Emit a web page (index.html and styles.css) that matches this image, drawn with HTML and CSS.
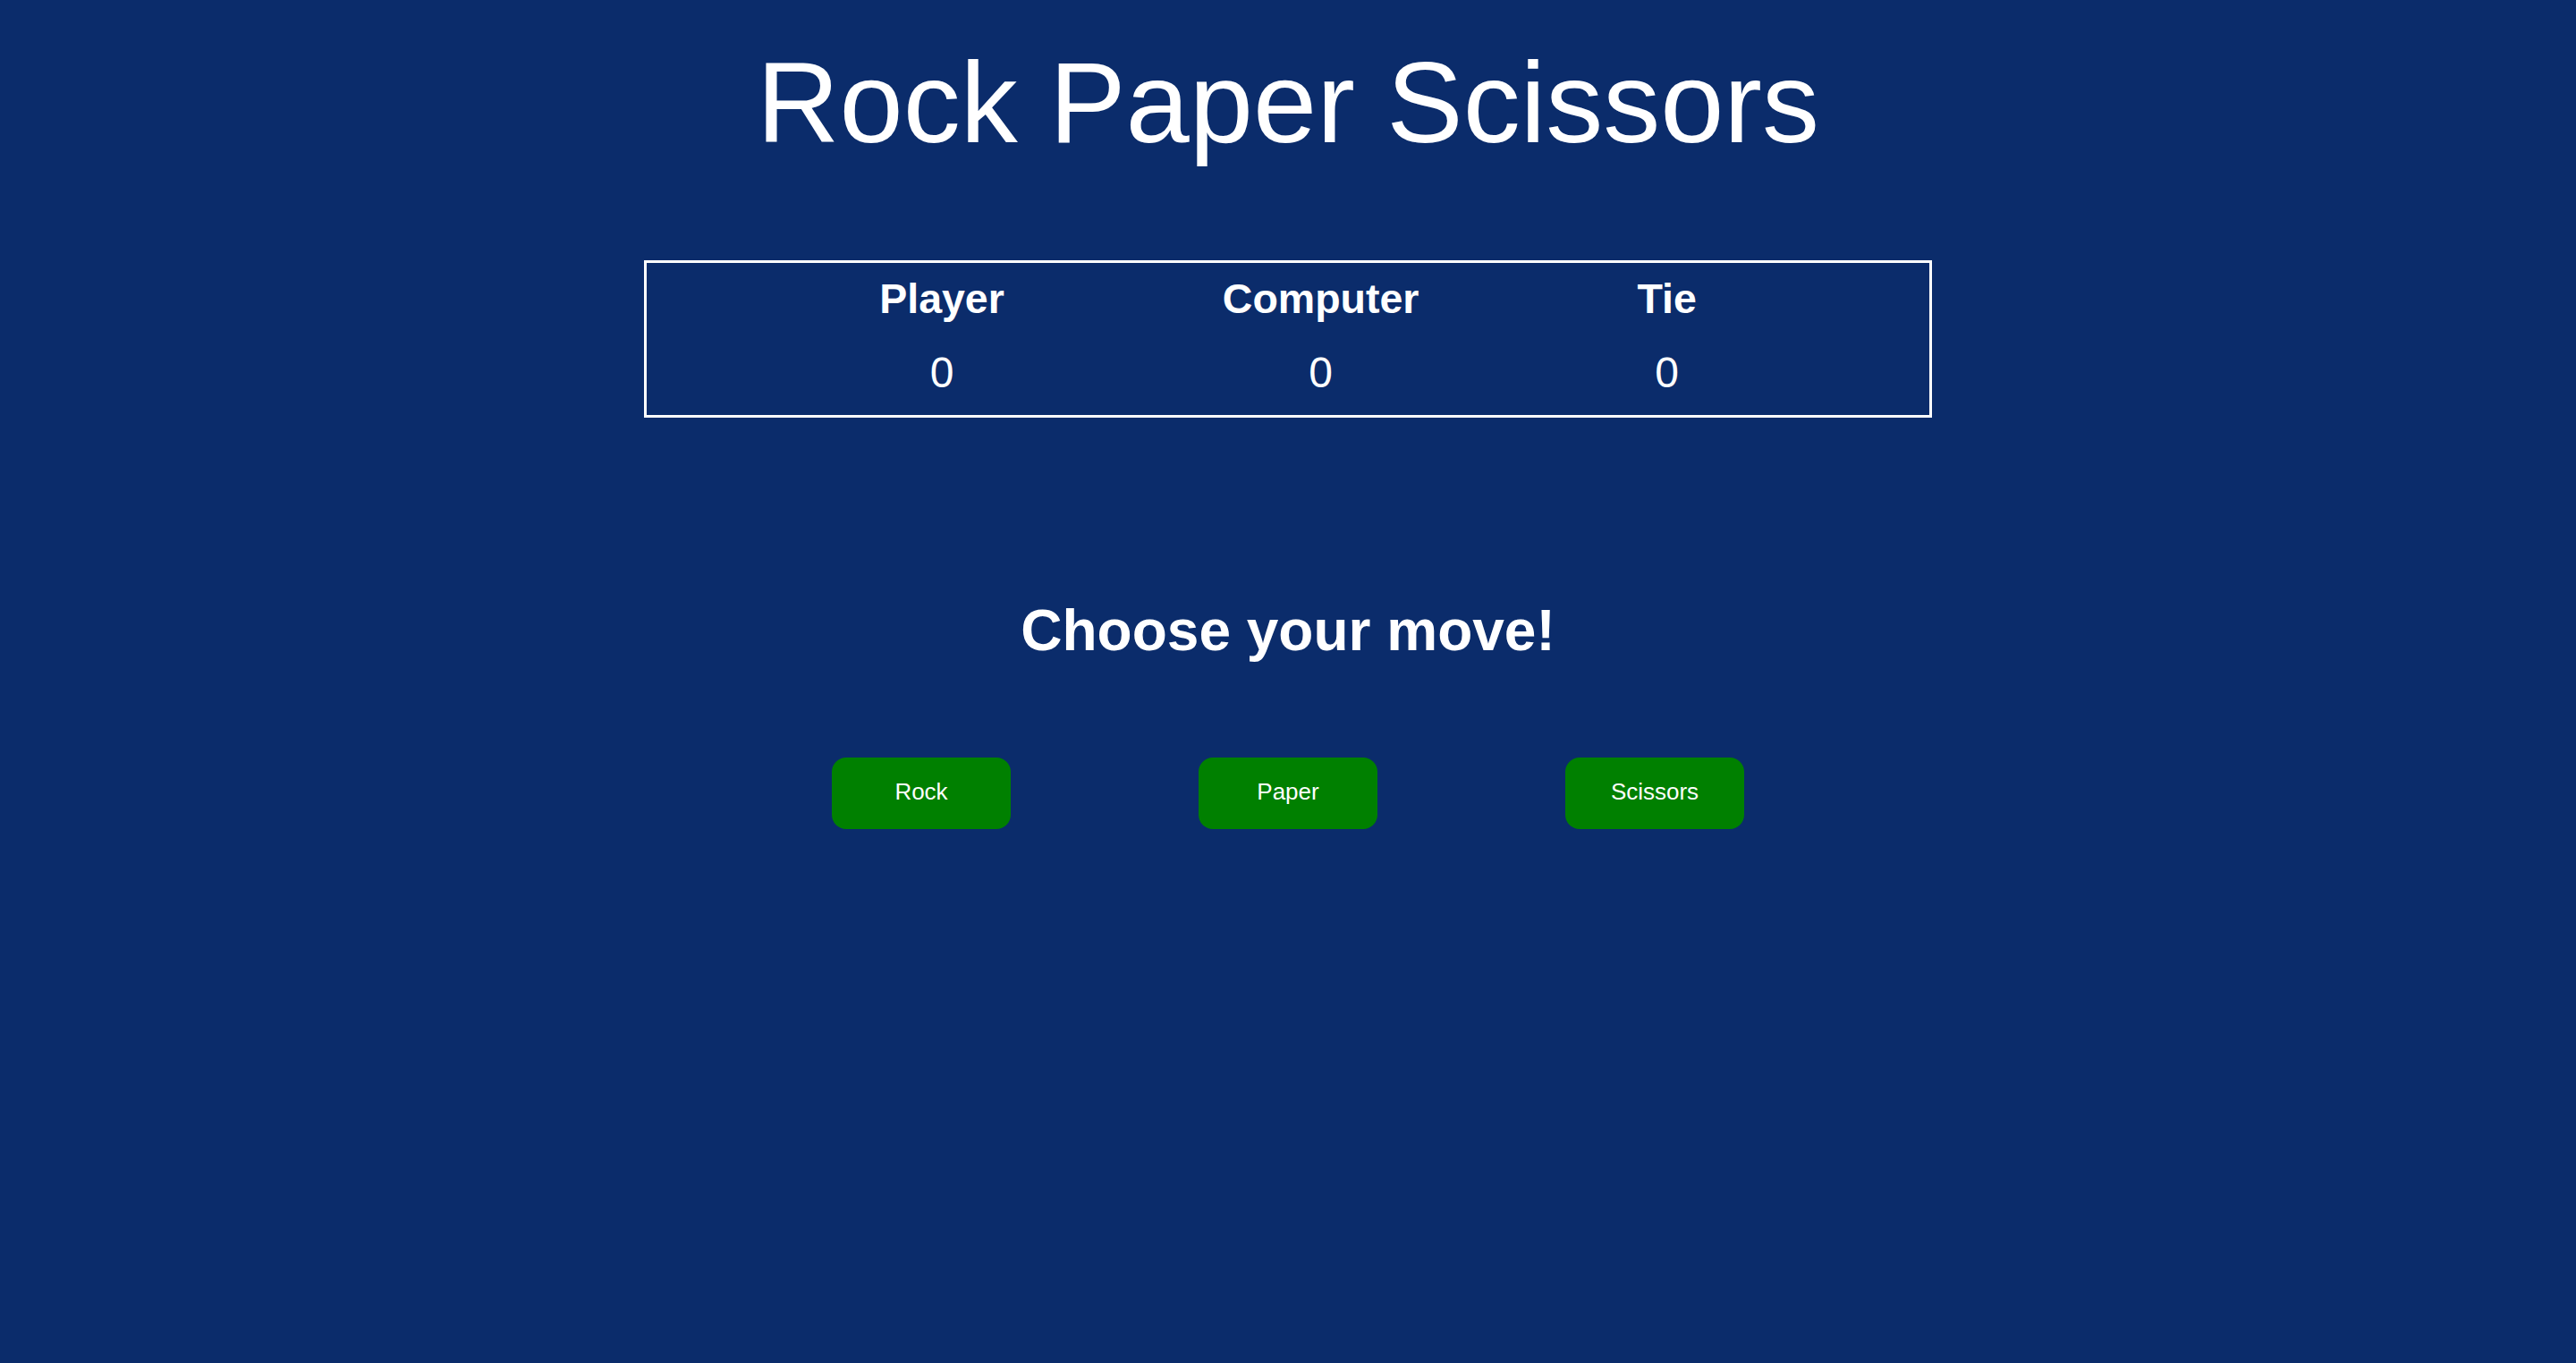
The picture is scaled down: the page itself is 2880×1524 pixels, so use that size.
FILE: index.html
```html
<!DOCTYPE html>
<html lang="en">
<head>
<meta charset="utf-8">
<title>Rock Paper Scissors</title>
<link rel="stylesheet" href="styles.css">
</head>
<body>
<main class="page">
  <h1 class="title">Rock Paper Scissors</h1>
  <section class="scoreboard">
    <div class="score-col">
      <div class="score-label">Player</div>
      <div class="score-value">0</div>
    </div>
    <div class="score-col">
      <div class="score-label">Computer</div>
      <div class="score-value">0</div>
    </div>
    <div class="score-col">
      <div class="score-label">Tie</div>
      <div class="score-value">0</div>
    </div>
  </section>
  <h2 class="prompt">Choose your move!</h2>
  <div class="moves">
    <button class="move-btn">Rock</button>
    <button class="move-btn">Paper</button>
    <button class="move-btn">Scissors</button>
  </div>
</main>
</body>
</html>
```

FILE: styles.css
```css
html, body {
  margin: 0;
  padding: 0;
  background: #0b2c6b;
  height: 100%;
}

body {
  font-family: "Liberation Sans", Arial, Helvetica, sans-serif;
  color: #ffffff;
}

.page {
  display: flex;
  flex-direction: column;
  align-items: center;
  padding-top: 41px;
}

.title {
  margin: 0;
  font-size: 128px;
  font-weight: 400;
  line-height: 147px;
}

.scoreboard {
  box-sizing: border-box;
  width: 1440px;
  margin-top: 103px;
  border: 3px solid #ffffff;
  padding: 13px 0 20px;
  display: flex;
  justify-content: center;
  gap: 244px;
}

.score-col {
  display: flex;
  flex-direction: column;
  align-items: center;
  gap: 27px;
}

.score-label {
  font-size: 46.5px;
  font-weight: 700;
  line-height: 55px;
}

.score-value {
  font-size: 48px;
  font-weight: 400;
  line-height: 55px;
}

.prompt {
  margin: 202px 0 0;
  font-size: 64px;
  font-weight: 700;
  line-height: 73px;
}

.moves {
  margin-top: 105px;
  display: flex;
  justify-content: center;
  gap: 210px;
}

.move-btn {
  width: 200px;
  height: 80px;
  border: none;
  border-radius: 16px;
  background: #008000;
  color: #ffffff;
  font-family: "Liberation Sans", Arial, Helvetica, sans-serif;
  font-size: 26px;
  padding: 0 0 3px;
  cursor: pointer;
}
```
